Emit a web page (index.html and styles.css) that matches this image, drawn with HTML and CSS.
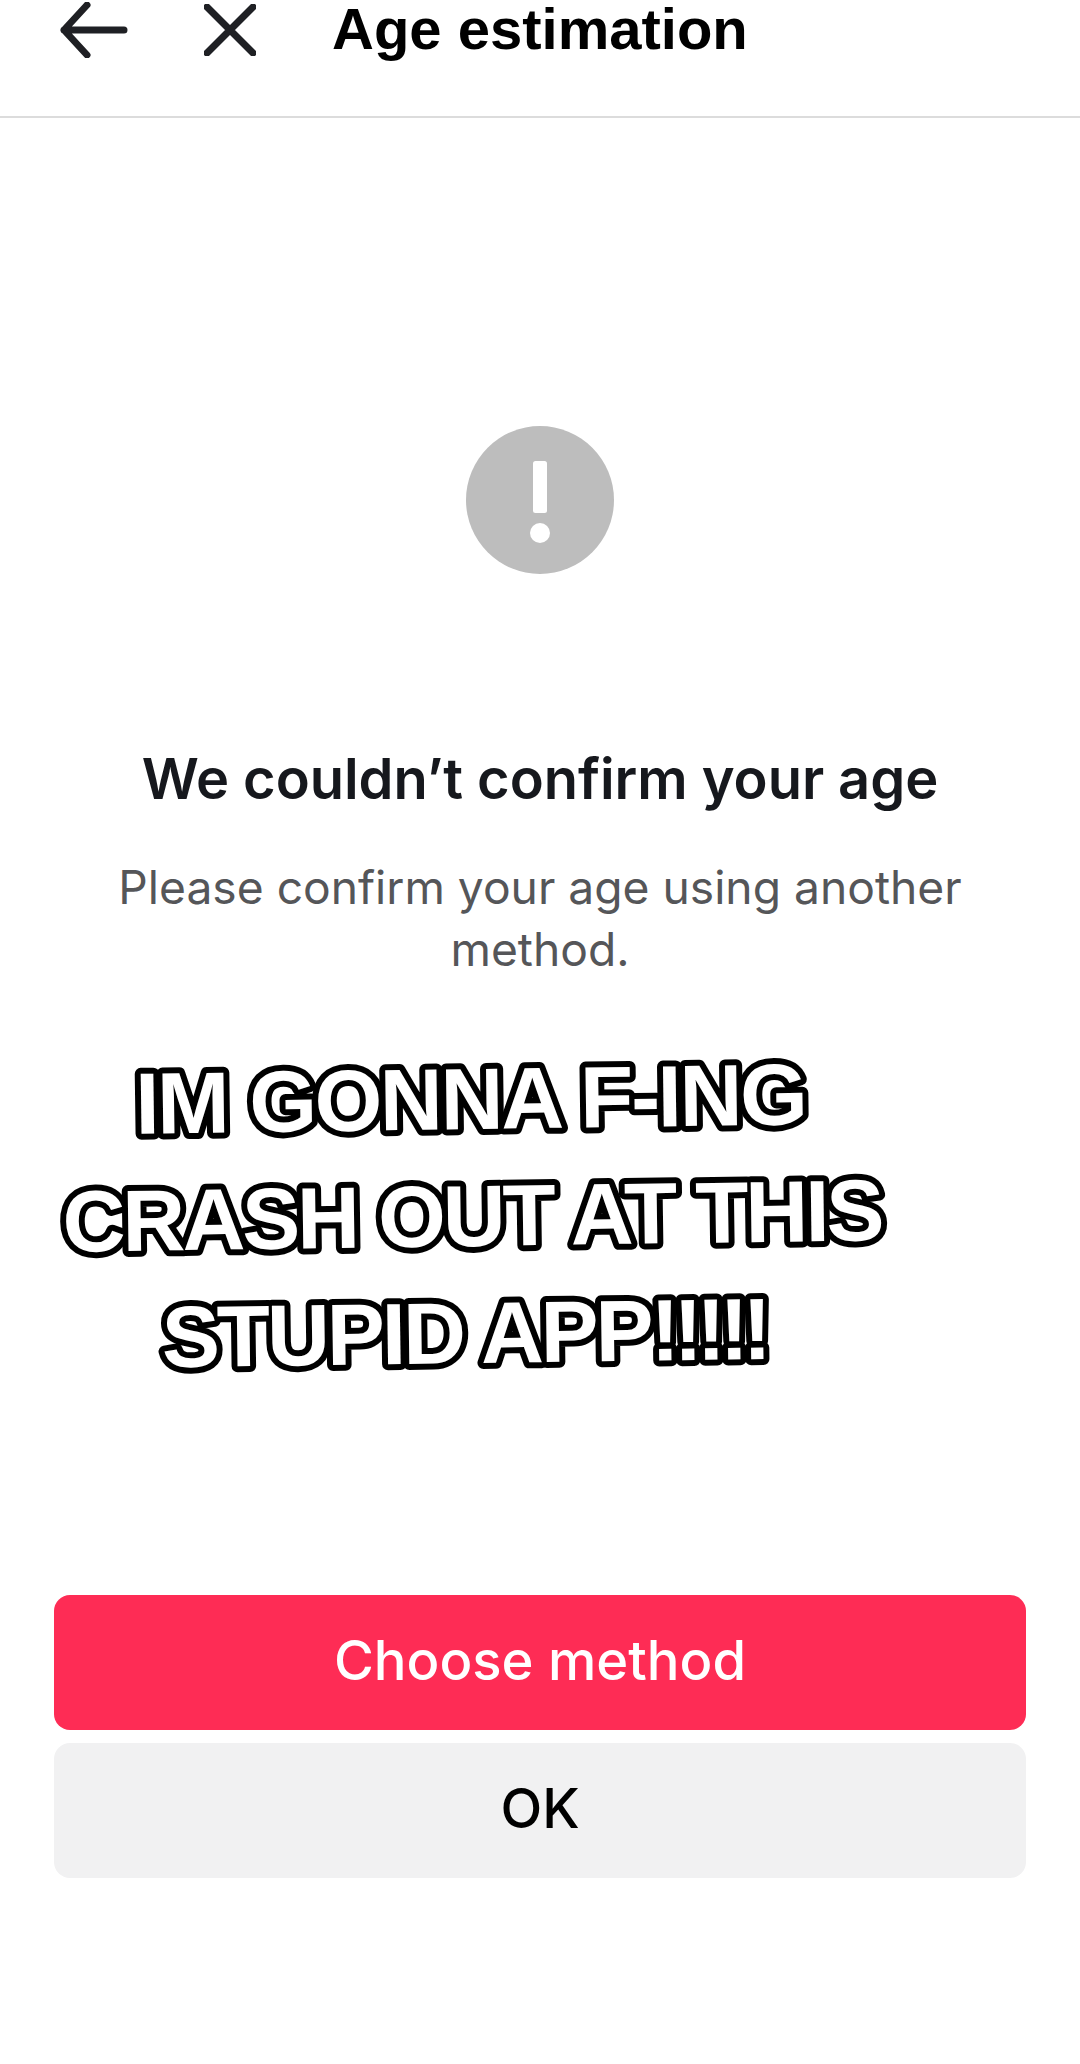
FILE: index.html
```html
<!DOCTYPE html>
<html lang="en">
<head>
<meta charset="utf-8">
<title>Age estimation</title>
<link rel="stylesheet" href="styles.css">
</head>
<body>
<div class="page">
  <header class="topbar">
    <svg class="icon-back" viewBox="0 0 68 56" aria-hidden="true"><path d="M27 3 4 28l23 25M4 28h60"/></svg>
    <svg class="icon-close" viewBox="0 0 52 52" aria-hidden="true"><path d="M3 3l46 46M49 3 3 49"/></svg>
    <h1 class="title">Age estimation</h1>
  </header>
  <main class="content">
    <svg class="alert" viewBox="0 0 148 148" aria-hidden="true">
      <circle cx="74" cy="74" r="74" fill="#bdbdbd"/>
      <rect x="67" y="35" width="14" height="52" rx="2.5" fill="#fff"/>
      <circle cx="74" cy="107" r="10" fill="#fff"/>
    </svg>
    <h2 class="heading">We couldn’t confirm your age</h2>
    <p class="message">Please confirm your age using another method.</p>
    <div class="actions">
      <button class="btn btn-primary">Choose method</button>
      <button class="btn btn-secondary">OK</button>
    </div>
  </main>
  <svg class="sticker" viewBox="0 0 1080 360">
    <g transform="rotate(-0.8 472 175)">
      <text class="sticker-line line-wide" x="472" y="89">IM GONNA F-ING</text>
      <text class="sticker-line" x="472" y="206">CRASH OUT AT THIS</text>
      <text class="sticker-line" x="462" y="323">STUPID APP<tspan class="bangs">!!!!!</tspan></text>
    </g>
  </svg>
</div>
</body>
</html>
```
FILE: styles.css
```css
* { box-sizing: border-box; }
html, body { margin: 0; padding: 0; background: #fff; }
.page { position: relative; width: 1080px; height: 2064px; overflow: hidden; background: #fff; }
.topbar {
  display: flex; align-items: center; height: 118px; padding: 4px 0 56px 60px;
  border-bottom: 2px solid #dcdcdc;
}
.icon-back { width: 68px; height: 56px; flex: none; margin-top: -4px; }
.icon-close { width: 52px; height: 52px; flex: none; margin-left: 76px; margin-top: -4px; }
.icon-back path, .icon-close path { fill: none; stroke: #1f2024; stroke-width: 7; stroke-linecap: round; stroke-linejoin: round; }
.title {
  margin: -6px 0 0 76px; font: 700 58px/52px "Liberation Sans", Arial, sans-serif; color: #000; white-space: nowrap;
}
.content { display: flex; flex-direction: column; align-items: center; padding-top: 308px; }
.alert { width: 148px; height: 148px; display: block; }
.heading {
  margin: 170px 0 0; font: 600 56px/70px Inter, sans-serif; letter-spacing: -0.05px; color: #16181d; text-align: center;
}
.message {
  margin: 42px 0 0; width: 880px; font: 400 46.2px/62px Inter, sans-serif; color: #555659; text-align: center;
}
.actions { display: flex; flex-direction: column; gap: 13px; width: 972px; margin-top: 615px; }
.btn {
  display: block; width: 100%; height: 135px; border: 0; border-radius: 16px; padding: 0 0 5px;
  font: 500 54.4px/60px Inter, sans-serif; text-align: center;
}
.btn-primary { background: #fe2c55; color: #fff; }
.btn-secondary { background: #f1f1f2; color: #000; }
.sticker { position: absolute; left: 0; top: 1040px; width: 1080px; height: 360px; }
.sticker-line {
  font: 700 87px "Liberation Sans", Arial, sans-serif; letter-spacing: -3px; text-anchor: middle;
  fill: #fff; stroke: #000; stroke-width: 12px; stroke-linejoin: round; paint-order: stroke fill;
}
.line-wide { letter-spacing: -2.3px; }
.bangs { letter-spacing: -6px; }
```
